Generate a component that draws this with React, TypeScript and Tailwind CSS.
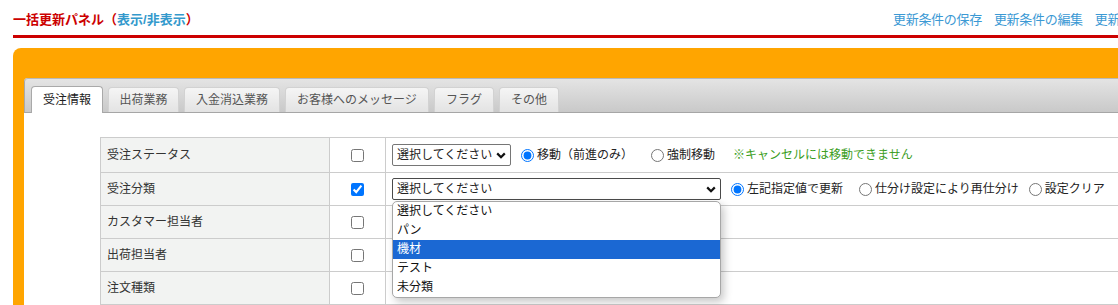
import React from 'react';

const tabs = [
  { label: '受注情報', w: 'w-[72px]', active: true },
  { label: '出荷業務', w: 'w-[71px]' },
  { label: '入金消込業務', w: 'w-[96px]' },
  { label: 'お客様へのメッセージ', w: 'w-[144px]' },
  { label: 'フラグ', w: 'w-[60px]' },
  { label: 'その他', w: 'w-[60px]' },
];

const options = ['選択してください', 'パン', '機材', 'テスト', '未分類'];

const Chevron = () => (
  <svg width="10" height="7" viewBox="0 0 10 7" className="shrink-0">
    <path d="M1.2 1.4 L5 5.2 L8.8 1.4" fill="none" stroke="#111" strokeWidth="2.2" />
  </svg>
);

const FakeSelect: React.FC<{ w: string; open?: boolean }> = ({ w, open }) => (
  <div className={`relative ${w} shrink-0`}>
    <div className={`flex items-center justify-between h-[22px] pl-[4px] pr-[4px] border rounded-[2px] bg-white ${open ? 'border-[#4a4a4a]' : 'border-[#767676]'}`}>
      <span>選択してください</span>
      <Chevron />
    </div>
    {open && (
      <ul className="absolute left-0 top-full mt-[1px] w-full z-10 bg-white border border-[#a7a7a7] rounded-[5px] shadow-[3px_4px_8px_rgba(0,0,0,0.22)] overflow-hidden">
        {options.map((o) => (
          <li
            key={o}
            className={`h-[19px] leading-[19px] pl-[4px] ${o === '機材' ? 'bg-[#1b68d3] text-white' : 'text-[#111]'}`}
          >
            {o}
          </li>
        ))}
      </ul>
    )}
  </div>
);

const Radio: React.FC<{ label: string; checked?: boolean; ml: string }> = ({ label, checked, ml }) => (
  <label className={`flex items-center ${ml} shrink-0`}>
    <input type="radio" defaultChecked={checked} className="w-[13px] h-[13px] m-0" />
    <span className="ml-[3px]">{label}</span>
  </label>
);

const Row: React.FC<{ label: string; h: string; checked?: boolean; children?: React.ReactNode }> = ({
  label,
  h,
  checked,
  children,
}) => (
  <tr className={h}>
    <td className="border border-[#cccccc] bg-[#f2f3f2] pl-[6px] text-[#333]">{label}</td>
    <td className="border border-[#cccccc] text-center">
      <input type="checkbox" defaultChecked={checked} className="w-[13px] h-[13px] m-0 align-middle" />
    </td>
    <td className="border border-[#cccccc] pl-[6px]">
      <div className="flex items-center">{children}</div>
    </td>
  </tr>
);

export default function App() {
  return (
    <div className="w-[1118px] h-[305px] overflow-hidden bg-white text-[12px] text-[#222] font-['Liberation_Sans','Noto_Sans_CJK_JP',sans-serif]">
      <div className="flex items-center h-[35px] pl-[13px] pt-[5px] whitespace-nowrap">
        <div className="w-[880px] shrink-0 text-[13px] font-bold text-[#cc0000]">
          一括更新パネル（<span className="text-[#3399cc]">表示/非表示</span>）
        </div>
        <div className="flex gap-[12px] text-[13px] tracking-[-0.3px] text-[#3b99d4]">
          <span>更新条件の保存</span>
          <span>更新条件の編集</span>
          <span>更新条件の削除</span>
        </div>
      </div>
      <div className="ml-[13px] h-[3px] bg-[#cc0000]" />

      <div className="ml-[13px] mt-[10px] w-[1200px] h-[260px] bg-[#ffa500] rounded-tl-[8px] pt-[30px] pl-[11px]">
        <div className="h-full bg-white rounded-tl-[4px]">
          <div className="flex items-end gap-[5px] h-[35px] pl-[6px] border-t border-l border-b border-t-[#b9b9b9] border-l-[#a9a9a9] border-b-[#a6a6a6] rounded-tl-[4px] bg-gradient-to-b from-[#e4e4e4] to-[#c9c9c9]">
            {tabs.map((t) =>
              t.active ? (
                <div
                  key={t.label}
                  className={`${t.w} h-[27px] -mb-[1px] flex items-center justify-center bg-white border border-b-0 border-[#a9a9a9] rounded-t-[4px] text-[#222]`}
                >
                  {t.label}
                </div>
              ) : (
                <div
                  key={t.label}
                  className={`${t.w} h-[25px] flex items-center justify-center bg-gradient-to-b from-[#f5f5f5] to-[#e3e3e3] border border-b-0 border-[#d2d2d2] rounded-t-[4px] text-[#555]`}
                >
                  {t.label}
                </div>
              )
            )}
          </div>

          <table className="ml-[76px] mt-[24px] w-[1100px] border-collapse table-fixed leading-[18px]">
            <colgroup>
              <col className="w-[229px]" />
              <col className="w-[56px]" />
              <col />
            </colgroup>
            <tbody>
              <Row label="受注ステータス" h="h-[35px]">
                <FakeSelect w="w-[119px]" />
                <Radio label="移動（前進のみ）" checked ml="ml-[10px]" />
                <Radio label="強制移動" ml="ml-[18px]" />
                <span className="ml-[18px] text-[#3a9d1c]">※キャンセルには移動できません</span>
              </Row>
              <Row label="受注分類" h="h-[33px]" checked>
                <FakeSelect w="w-[329px]" open />
                <Radio label="左記指定値で更新" checked ml="ml-[10px]" />
                <Radio label="仕分け設定により再仕分け" ml="ml-[16px]" />
                <Radio label="設定クリア" ml="ml-[10px]" />
              </Row>
              <Row label="カスタマー担当者" h="h-[33px]" />
              <Row label="出荷担当者" h="h-[33px]" />
              <Row label="注文種類" h="h-[33px]" />
              <Row label="" h="h-[33px]" />
            </tbody>
          </table>
        </div>
      </div>
    </div>
  );
}
